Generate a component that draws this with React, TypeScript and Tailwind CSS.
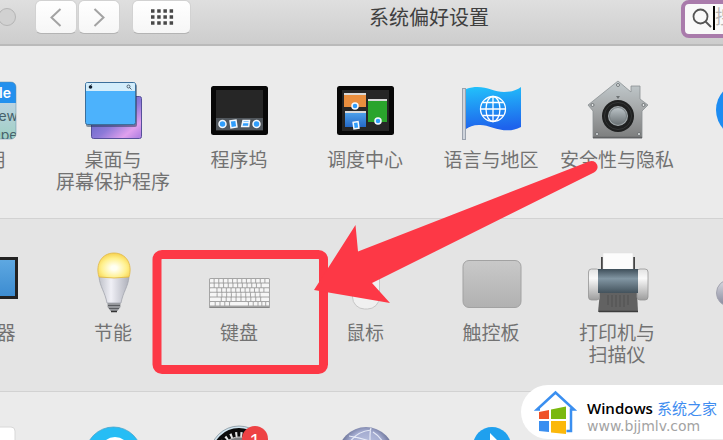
import type { ReactNode } from 'react';
import clsx from 'clsx';

interface Pane {
  id: string;
  icon: ReactNode;
  label?: string;
  badge?: string;
}

function Icon({ children }: { children: ReactNode }) {
  return (
    <svg viewBox="0 0 64 64" className="block size-16 overflow-visible" aria-hidden="true">
      {children}
    </svg>
  );
}

function GeneralIcon() {
  return (
    <Icon>
      <defs>
        <linearGradient id="general" x1="0" y1="0" x2="0" y2="1">
          <stop offset="0.35" stopColor="#bdd3e2" />
          <stop offset="1" stopColor="#9fd0c4" />
        </linearGradient>
        <clipPath id="generalClip">
          <rect x="4" y="4" width="57" height="57" rx="5" />
        </clipPath>
      </defs>
      <g clipPath="url(#generalClip)" className="font-['Inter','Liberation_Sans',sans-serif]">
        <rect x="4" y="4" width="57" height="57" fill="url(#general)" />
        <rect x="4" y="4" width="57" height="21" fill="#2390ee" />
        <text x="56" y="20" textAnchor="end" fontSize="14" fontWeight="600" fill="#fff">File</text>
        <text x="33" y="43" fontSize="14" fill="#46606b">New</text>
        <text x="35" y="62" fontSize="14" fill="#46606b">Open</text>
      </g>
      <rect x="4" y="4" width="57" height="57" rx="5" fill="none" stroke="#5f8ea8" strokeOpacity="0.5" />
    </Icon>
  );
}

function DesktopIcon() {
  return (
    <Icon>
      <defs>
        <linearGradient id="wallpaper" x1="0" y1="0" x2="1" y2="1">
          <stop offset="0.2" stopColor="#5d63c4" />
          <stop offset="0.55" stopColor="#8d7ad8" />
          <stop offset="0.8" stopColor="#e0a0ee" />
          <stop offset="1" stopColor="#a87be0" />
        </linearGradient>
      </defs>
      <rect x="10.5" y="18.5" width="50" height="42" rx="2" fill="url(#wallpaper)" stroke="#56509a" />
      <rect x="5" y="6" width="51" height="43" rx="2" fill="#1e3550" opacity="0.5" />
      <rect x="4.5" y="4.5" width="50" height="42" rx="2" fill="#4cb2fc" stroke="#3b6f9b" />
      <path d="M5 6a1 1 0 0 1 1-1h47a1 1 0 0 1 1 1v7H5z" fill="#d3edfb" />
      <circle cx="9.5" cy="9" r="1.8" fill="#123" />
      <path d="M9.5 7.500l1-1" stroke="#123" />
      <circle cx="47.5" cy="8.5" r="1.5" fill="none" stroke="#345" strokeWidth="0.8" />
      <path d="M48.5 9.5l2 2" stroke="#345" strokeWidth="0.8" />
    </Icon>
  );
}

function ScreenFrame() {
  return (
    <>
      <rect x="4" y="8" width="57" height="49" rx="2.5" fill="#080808" />
      <rect x="9" y="12" width="47" height="41" fill="#262626" />
    </>
  );
}

function DockIcon() {
  return (
    <Icon>
      <ScreenFrame />
      <rect x="9" y="40" width="47" height="12" fill="#50565c" />
      <g fill="#2f9dfb" stroke="#f4f8fc" strokeWidth="1.5">
        <circle cx="15.5" cy="46" r="3.5" />
        <rect x="23.5" y="42.5" width="6" height="7" transform="rotate(-8 26 46)" />
        <path d="M36 42.500h6.500l-.8 6h-7zM35.500 44.500h6.500" />
        <circle cx="49.5" cy="46" r="3.5" />
      </g>
    </Icon>
  );
}

function MissionControlIcon() {
  return (
    <Icon>
      <defs>
        <linearGradient id="mcBlue" x1="0" y1="0" x2="0" y2="1">
          <stop offset="0" stopColor="#52a7ee" />
          <stop offset="1" stopColor="#2468c6" />
        </linearGradient>
      </defs>
      <ScreenFrame />
      <rect x="11" y="15" width="22" height="14" fill="#e98e3e" />
      <rect x="12" y="33" width="21" height="16" fill="url(#mcBlue)" />
      <rect x="35" y="21" width="19" height="23" fill="#2aa42c" />
      <path d="M11 16h22M12 34h21M35 22h19" stroke="#d8d8d8" strokeWidth="2" />
      <g fill="#2f9dfb" stroke="#f4f8fc" strokeWidth="1.5">
        <circle cx="22" cy="28" r="3" />
        <circle cx="45" cy="43" r="3" />
        <rect x="20.5" y="44" width="5" height="6.5" transform="rotate(-8 23 47)" />
      </g>
    </Icon>
  );
}

function FlagIcon() {
  return (
    <Icon>
      <defs>
        <linearGradient id="flag" x1="0" y1="0" x2="0.1" y2="1">
          <stop offset="0" stopColor="#22c2fb" />
          <stop offset="1" stopColor="#1e62ec" />
        </linearGradient>
      </defs>
      <rect x="3.5" y="10.5" width="3" height="51" fill="#cfd4dc" stroke="#9ba2ad" />
      <path d="M7 11C24 5 33 14 45 14C53 14 58 12 62 9V49C45 58 31 46 20 47C14 47 10 49 7 51Z" fill="url(#flag)" />
      <g fill="none" stroke="#fff" strokeWidth="1.3">
        <circle cx="34" cy="31" r="12.5" />
        <ellipse cx="34" cy="31" rx="7" ry="12.5" />
        <path d="M34 18.500v25M21.500 31h25M23.500 24.500h21M23.500 37.500h21" />
      </g>
    </Icon>
  );
}

function SecurityIcon() {
  return (
    <Icon>
      <defs>
        <linearGradient id="house" x1="0" y1="0" x2="0" y2="1">
          <stop offset="0" stopColor="#c3cbce" />
          <stop offset="0.5" stopColor="#a4a7a8" />
          <stop offset="1" stopColor="#7c7d7d" />
        </linearGradient>
        <linearGradient id="knob" x1="0" y1="0" x2="0" y2="1">
          <stop offset="0" stopColor="#bcc4c8" />
          <stop offset="1" stopColor="#6b7275" />
        </linearGradient>
      </defs>
      <path d="M33 3L46 14V8h9v13l8 6-6 6v27H8V33l-5-6z" fill="url(#house)" stroke="#8a9093" strokeWidth="0.8" />
      <path d="M8 59.500h49" stroke="#606263" strokeWidth="1.5" />
      <circle cx="33" cy="38" r="16" fill="#1f2020" />
      <circle cx="33" cy="38" r="13.5" fill="none" stroke="#333535" />
      <circle cx="33" cy="38" r="10" fill="#a3aaad" />
      <circle cx="33" cy="38" r="8.5" fill="url(#knob)" stroke="#6c7376" strokeWidth="0.8" />
      <path d="M31 18h4l-2 3z" fill="#6d7274" />
      <g fill="#e4e7e8" stroke="#5f6567" strokeWidth="0.8">
        <circle cx="33" cy="7" r="1.5" />
        <circle cx="7.5" cy="27" r="1.5" />
        <circle cx="58.5" cy="27" r="1.5" />
        <circle cx="12" cy="56" r="1.5" />
        <circle cx="54" cy="56" r="1.5" />
      </g>
    </Icon>
  );
}

function SpotlightIcon() {
  return (
    <Icon>
      <circle cx="33" cy="32" r="28" fill="#1d8cf2" />
      <circle cx="30" cy="29" r="10" fill="none" stroke="#fff" strokeWidth="4" />
    </Icon>
  );
}

function DisplayIcon() {
  return (
    <Icon>
      <defs>
        <linearGradient id="display" x1="0" y1="0" x2="0" y2="1">
          <stop offset="0" stopColor="#5fa9e2" />
          <stop offset="1" stopColor="#3b8bd0" />
        </linearGradient>
      </defs>
      <path d="M24 48h16l4 10H20z" fill="#bfbfbf" />
      <rect x="2" y="7.5" width="59.5" height="39" fill="url(#display)" stroke="#222" strokeWidth="3" />
    </Icon>
  );
}

function BulbIcon() {
  return (
    <Icon>
      <defs>
        <radialGradient id="glow" cx="0.5" cy="0.6" r="0.6">
          <stop offset="0.15" stopColor="#fffff2" />
          <stop offset="0.65" stopColor="#fff08c" />
          <stop offset="1" stopColor="#f7d04c" />
        </radialGradient>
        <linearGradient id="cone" x1="0" y1="0" x2="1" y2="0">
          <stop offset="0" stopColor="#bfc1c9" />
          <stop offset="0.4" stopColor="#f0f0f6" />
          <stop offset="1" stopColor="#aeb0ba" />
        </linearGradient>
      </defs>
      <path d="M26.500 51h13v5l-3 4h-7l-3-4z" fill="#96989c" />
      <path d="M27 54.500h12M28 57.500h10" stroke="#5c5e62" />
      <path d="M30 60.500h6" stroke="#333" strokeWidth="1.5" />
      <path d="M18 26h30c-1 10-6 15-8 26H26c-2-11-7-16-8-26z" fill="url(#cone)" stroke="#a2a4ad" strokeWidth="0.8" />
      <path d="M18 26C14 13 21 2 33 2s19 11 15 24q-15 2-30 0z" fill="url(#glow)" stroke="#e0b846" strokeWidth="0.8" />
    </Icon>
  );
}

// Key widths for each row of the keyboard drawing
const keyRows = [
  [4, 4, 4, 4, 4, 4, 4, 4, 4, 4, 4, 4, 4],
  [4, 4, 4, 4, 4, 4, 4, 4, 4, 4, 4, 8],
  [7, 4, 4, 4, 4, 4, 4, 4, 4, 4, 4, 5],
  [7, 4, 4, 4, 4, 4, 4, 4, 4, 4, 9],
  [11, 4, 4, 4, 4, 4, 4, 4, 4, 8],
  [5, 4, 4, 4, 19, 4, 4, 3, 3, 3],
];

function KeyboardIcon() {
  return (
    <Icon>
      <rect x="2" y="27" width="61" height="30" rx="1.5" fill="#a5a5a5" />
      <path d="M2.500 56.500h60" stroke="#858585" />
      {keyRows.map((row, r) => {
        const scale = (59 - (row.length - 1)) / row.reduce((sum, w) => sum + w, 0);
        let x = 3;
        return row.map((w, i) => {
          const left = x;
          x += w * scale + 1;
          return (
            <rect key={`${r}-${i}`} x={left} y={28 + r * 4.6} width={w * scale} height="3.6" rx="0.5" fill="#f6f6f6" />
          );
        });
      })}
    </Icon>
  );
}

function MouseIcon() {
  return (
    <Icon>
      <rect x="19.5" y="6" width="27" height="52" rx="12" fill="#f0f0f0" stroke="#c6c6c6" />
    </Icon>
  );
}

function TrackpadIcon() {
  return (
    <Icon>
      <defs>
        <linearGradient id="trackpad" x1="0" y1="0" x2="0" y2="1">
          <stop offset="0" stopColor="#c9c9c9" />
          <stop offset="1" stopColor="#b1b1b1" />
        </linearGradient>
      </defs>
      <rect x="4" y="9.5" width="58" height="47" rx="6" fill="url(#trackpad)" stroke="#a2a2a2" />
    </Icon>
  );
}

function PrinterIcon() {
  return (
    <Icon>
      <defs>
        <linearGradient id="printer" x1="0" y1="0" x2="0" y2="1">
          <stop offset="0" stopColor="#3f4f5a" />
          <stop offset="0.4" stopColor="#8296a3" />
          <stop offset="1" stopColor="#43525c" />
        </linearGradient>
        <linearGradient id="caps" x1="0" y1="0" x2="0" y2="1">
          <stop offset="0" stopColor="#e2e2e2" />
          <stop offset="0.3" stopColor="#fafafa" />
          <stop offset="1" stopColor="#9d9d9d" />
        </linearGradient>
      </defs>
      <path d="M17 6v13M49 6v13" stroke="#444" strokeWidth="2" />
      <rect x="18" y="2" width="30" height="17" fill="#fcfcfc" stroke="#ddd" strokeWidth="0.5" />
      <path d="M15 41h37l1 20H13z" fill="#626262" />
      <path d="M14 60.500h39" stroke="#3d3d3d" strokeWidth="1.5" />
      <path d="M23 44v10M27 44v12M31 44v12M35 44v12M39 44v12M43 44v10" stroke="#505050" />
      <rect x="3.5" y="18" width="11" height="31" rx="3" fill="url(#caps)" stroke="#949494" strokeWidth="0.8" />
      <rect x="52" y="18" width="11" height="31" rx="3" fill="url(#caps)" stroke="#949494" strokeWidth="0.8" />
      <rect x="13" y="18" width="40" height="24" fill="url(#printer)" />
    </Icon>
  );
}

function SoundIcon() {
  return (
    <Icon>
      <defs>
        <linearGradient id="sound" x1="0" y1="0" x2="0" y2="1">
          <stop offset="0" stopColor="#dcdde4" />
          <stop offset="1" stopColor="#84869a" />
        </linearGradient>
      </defs>
      <circle cx="19" cy="42" r="13.5" fill="url(#sound)" stroke="#a3a4b0" />
    </Icon>
  );
}

function AccountIcon() {
  return (
    <Icon>
      <rect x="4" y="3" width="56" height="58" rx="4" fill="#fff" stroke="#d8d8d8" />
    </Icon>
  );
}

function StoreIcon() {
  return (
    <Icon>
      <circle cx="32.5" cy="31" r="28" fill="#26bdf5" stroke="#48a5cc" strokeWidth="0.8" />
      <circle cx="34" cy="28" r="15" fill="#fff" />
    </Icon>
  );
}

function UpdateIcon() {
  return (
    <Icon>
      <circle cx="32" cy="31" r="28" fill="#0b0b0b" stroke="#cfe3ee" strokeWidth="2" />
      <circle cx="32" cy="31" r="29" fill="none" stroke="#6c7b84" strokeWidth="0.6" />
      <circle cx="32" cy="31" r="20" fill="none" stroke="#e4e6e7" strokeWidth="6" strokeDasharray="2 3" />
      <circle cx="32" cy="31" r="18" fill="#7b7f82" stroke="#c8c8c8" />
    </Icon>
  );
}

function NetworkIcon() {
  return (
    <Icon>
      <defs>
        <radialGradient id="network" cx="0.5" cy="0.4" r="0.6">
          <stop offset="0" stopColor="#c3cbe6" />
          <stop offset="0.55" stopColor="#a3abd0" />
          <stop offset="0.85" stopColor="#555c80" />
        </radialGradient>
      </defs>
      <circle cx="33" cy="31" r="28" fill="url(#network)" />
      <path d="M38 4Q36 10 38 30M38 6Q20 8 14 24M40 8Q50 14 54 28M16 12Q30 14 44 20" fill="none" stroke="#e6eaf6" strokeWidth="1.2" />
    </Icon>
  );
}

function BluetoothIcon() {
  return (
    <Icon>
      <rect x="14" y="3" width="38" height="58" rx="19" fill="#1fa0ee" />
      <path d="M31 38V9l9 9-16 14" fill="#fff" />
    </Icon>
  );
}

const sections: Pane[][] = [
  [
    { id: 'general', label: '通用', icon: <GeneralIcon /> },
    { id: 'desktop', label: '桌面与\n屏幕保护程序', icon: <DesktopIcon /> },
    { id: 'dock', label: '程序坞', icon: <DockIcon /> },
    { id: 'mission-control', label: '调度中心', icon: <MissionControlIcon /> },
    { id: 'language', label: '语言与地区', icon: <FlagIcon /> },
    { id: 'security', label: '安全性与隐私', icon: <SecurityIcon /> },
    { id: 'spotlight', icon: <SpotlightIcon /> },
  ],
  [
    { id: 'displays', label: '显示器', icon: <DisplayIcon /> },
    { id: 'energy', label: '节能', icon: <BulbIcon /> },
    { id: 'keyboard', label: '键盘', icon: <KeyboardIcon /> },
    { id: 'mouse', label: '鼠标', icon: <MouseIcon /> },
    { id: 'trackpad', label: '触控板', icon: <TrackpadIcon /> },
    { id: 'printers', label: '打印机与\n扫描仪', icon: <PrinterIcon /> },
    { id: 'sound', icon: <SoundIcon /> },
  ],
  [
    { id: 'accounts', icon: <AccountIcon /> },
    { id: 'store', icon: <StoreIcon /> },
    { id: 'update', icon: <UpdateIcon />, badge: '1' },
    { id: 'network', icon: <NetworkIcon /> },
    { id: 'bluetooth', icon: <BluetoothIcon /> },
  ],
];

function PaneButton({ pane }: { pane: Pane }) {
  return (
    <button type="button" aria-label={pane.label ?? pane.id} className="relative flex flex-col items-center gap-2">
      {pane.icon}
      {pane.badge && (
        <span className="absolute left-[66px] top-0.5 flex size-[26px] items-center justify-center rounded-full bg-[#ee4244] pt-1 text-xl font-medium text-white">
          {pane.badge}
        </span>
      )}
      {pane.label && (
        <span className="whitespace-pre text-center text-[19px] leading-[22px] text-[#727272]">{pane.label}</span>
      )}
    </button>
  );
}

function Toolbar() {
  const buttonClass =
    'flex h-[34px] items-center justify-center rounded-md border border-[#d2d2d2] border-b-[#b4b4b4] bg-linear-to-b from-white to-[#f6f6f6]';

  return (
    <header className="flex h-[46px] items-start overflow-hidden border-b-2 border-[#bababa] bg-linear-to-b from-[#dfdfdf] to-[#cdcdcd]">
      <span className="-ml-0.5 mt-2 size-[18px] shrink-0 rounded-full border border-[#b5b5b5] bg-[#d1d1d1]" />
      <nav className="ml-[19px] flex shrink-0 gap-px">
        <button type="button" aria-label="后退" className={clsx(buttonClass, 'w-[42px]')}>
          <svg viewBox="0 0 12 20" className="h-5 w-3" fill="none" stroke="#a3a3a3" strokeWidth="2">
            <path d="M10.500 2L1.500 10.500l9 8.500" />
          </svg>
        </button>
        <button type="button" aria-label="前进" className={clsx(buttonClass, 'w-[42px]')}>
          <svg viewBox="0 0 12 20" className="h-5 w-3" fill="none" stroke="#a3a3a3" strokeWidth="2">
            <path d="M1.500 2l9 8.500-9 8.500" />
          </svg>
        </button>
      </nav>
      <button type="button" aria-label="显示全部" className={clsx(buttonClass, 'ml-3 w-[59px] shrink-0')}>
        <svg viewBox="0 0 24 18" className="h-[18px] w-6" fill="none" stroke="#484848" strokeWidth="3.5" strokeDasharray="3.5 2.7">
          <path d="M1 3h22.100M1 9h22.100M1 15h22.100" />
        </svg>
      </button>
      <h1 className="mr-3.5 flex-1 text-center text-xl leading-9 text-[#3f3f3f]">系统偏好设置</h1>
      <label className="-mr-24 flex h-[38px] w-[138px] shrink-0 items-center rounded-lg border-4 border-[#a97bab] bg-[#f9f9f9] pb-0.5 pl-[7px]">
        <svg viewBox="0 0 20 20" className="size-5 shrink-0" fill="none" stroke="#555" strokeWidth="1.8">
          <circle cx="8.5" cy="8.5" r="7" />
          <path d="M13.500 13.500l5.500 5.500" />
        </svg>
        <span className="ml-px h-6 w-0.5 shrink-0 bg-black" />
        <input
          type="search"
          aria-label="搜索"
          placeholder="搜索"
          className="w-full min-w-0 bg-transparent text-[19px] outline-none placeholder:text-[#b5b5b5]"
        />
      </label>
    </header>
  );
}

function Annotation() {
  return (
    <svg
      width="460"
      height="230"
      viewBox="150 150 460 230"
      className="pointer-events-none absolute left-[150px] top-[150px]"
      aria-hidden="true"
    >
      <rect x="157" y="254.5" width="166.5" height="115" rx="5" fill="none" stroke="#fd3846" strokeWidth="9" />
      <path d="M314 290L355.500 225L358 251.500L589 161.500A6 6 0 0 1 594 172.500L372 283L390 303Z" fill="#fd3846" />
    </svg>
  );
}

function SiteLogo() {
  return (
    <a
      href="#"
      className="absolute bottom-px right-0 flex h-[54px] w-[202px] items-center gap-[7px] rounded-l-full bg-white pl-[13px]"
    >
      <svg viewBox="0 0 46 46" className="h-[46px] w-[46px] shrink-0" aria-hidden="true">
        <path d="M6 20.500H3L21.500 3.500L40 20.500h-3v21.500h-4.500" fill="none" stroke="#3a8ff0" strokeWidth="2.5" />
        <path d="M5 23l10-2v9H5z" fill="#ef5228" />
        <path d="M17 20.500L32 17.500V30H17z" fill="#7ab80e" />
        <path d="M5 32h10v11L5 42z" fill="#3a8ff0" />
        <path d="M17 32h15v13l-15-1.500z" fill="#fbb80b" />
      </svg>
      <span className="flex flex-col pt-2">
        <span className="flex items-center gap-1 whitespace-nowrap font-['Open_Sans','Noto_Sans_CJK_SC',sans-serif] text-[15px] leading-5 text-[#3f8df0]">
          <span className="font-semibold text-black">Windows</span>
          <span>系统之家</span>
        </span>
        <span className="font-['DejaVu_Sans',sans-serif] text-sm leading-4 text-[#a3a3a3]">www.bjjmlv.com</span>
      </span>
    </a>
  );
}

export default function App() {
  return (
    <div className="relative h-screen overflow-hidden bg-[#ebebeb] font-['Liberation_Sans','Noto_Sans_CJK_SC',sans-serif]">
      <Toolbar />
      <main>
        {sections.map((panes, i) => (
          <section
            key={i}
            className={clsx(
              'min-h-[173px] border-b border-[#d2d2d2] pt-8',
              i % 2 === 1 ? 'bg-[#e4e4e4]' : 'bg-[#ebebeb]'
            )}
          >
            <div className="-ml-[76px] grid grid-cols-[repeat(7,126px)] items-start">
              {panes.map((pane) => (
                <PaneButton key={pane.id} pane={pane} />
              ))}
            </div>
          </section>
        ))}
      </main>
      <Annotation />
      <SiteLogo />
    </div>
  );
}
